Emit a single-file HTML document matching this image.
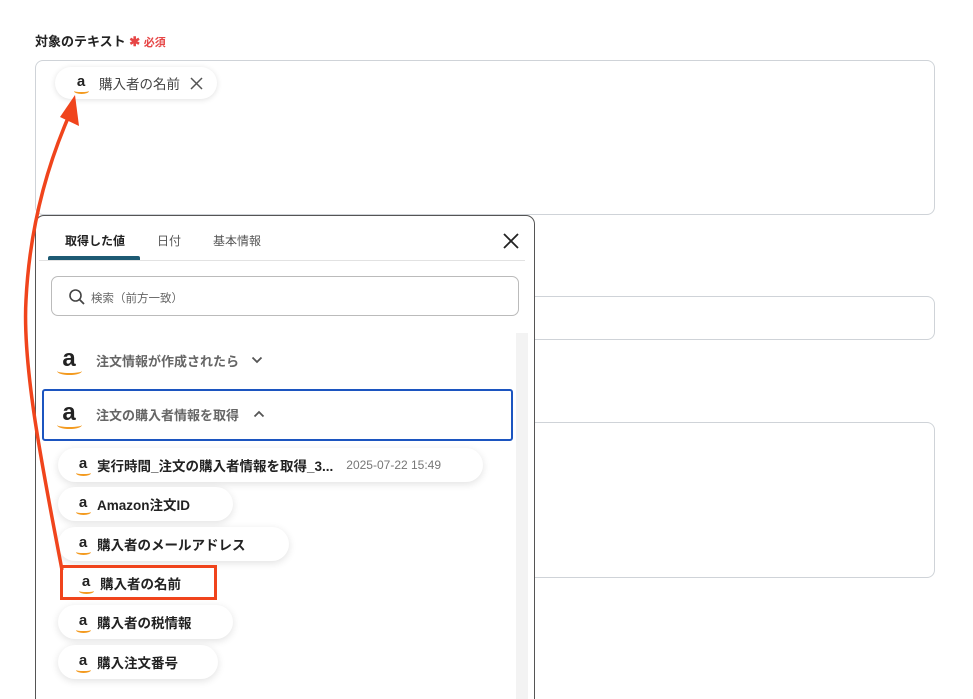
<!DOCTYPE html>
<html><head><meta charset="utf-8"><style>
*{box-sizing:border-box;margin:0;padding:0}
html,body{width:973px;height:699px;overflow:hidden}
body{background:#fff;position:relative;font-family:"Liberation Sans","Noto Sans CJK JP",sans-serif;color:#333}
.abs{position:absolute}
.field{position:absolute;border:1px solid #cfd3d8;border-radius:8px;background:#fff}
.chip{position:absolute;height:34px;border-radius:17px;background:#fff;box-shadow:0 2px 8px rgba(0,0,0,.12);display:flex;align-items:center;padding-left:15px;font-size:13.5px;font-weight:bold;color:#222;white-space:nowrap}
.a{display:inline-block;width:20px;font-weight:bold;font-size:15px;color:#222;position:relative;text-align:center;margin-right:4px;line-height:14px;top:-1px}
.a:after{content:"";position:absolute;left:3px;right:2px;bottom:-5px;height:4px;border-bottom:2px solid #f39a1f;border-radius:0 0 50% 50%}
.big{font-size:24px;width:30px;line-height:20px}
.big:after{bottom:-6px;height:6px}
</style></head><body>
<div class="abs" style="left:35px;top:31px;font-size:13px;font-weight:bold;color:#222">対象のテキスト <span style="color:#e64545">✱ <span style="font-size:11px">必須</span></span></div>
<div class="field" style="left:35px;top:60px;width:900px;height:155px"></div>
<div class="abs" style="left:55px;top:67px;width:162px;height:32px;border-radius:16px;background:#fff;box-shadow:0 1px 6px rgba(0,0,0,.12);display:flex;align-items:center;padding-left:16px;font-size:13.5px;color:#444"><span class="a">a</span><span style="margin-left:4px">購入者の名前</span><svg style="margin-left:10px" width="13" height="13" viewBox="0 0 13 13"><path d="M1 1L12 12M12 1L1 12" stroke="#555" stroke-width="1.5"/></svg></div>
<div class="field" style="left:35px;top:296px;width:900px;height:44px"></div>
<div class="field" style="left:35px;top:422px;width:900px;height:156px"></div>

<div class="abs" style="left:35px;top:215px;width:500px;height:500px;border:1px solid #555;border-radius:9px;background:#fff">
 <div class="abs" style="left:29px;top:16px;font-size:12px;font-weight:bold;color:#222">取得した値</div>
 <div class="abs" style="left:121px;top:16px;font-size:12px;color:#555">日付</div>
 <div class="abs" style="left:177px;top:16px;font-size:12px;color:#555">基本情報</div>
 <div class="abs" style="left:12px;top:40px;width:92px;height:4px;background:#1d5a73;border-radius:2px 2px 0 0"></div>
 <div class="abs" style="left:3px;top:44px;width:486px;height:1px;background:#e2e2e2"></div>
 <svg class="abs" style="left:466px;top:16px" width="18" height="18" viewBox="0 0 18 18"><path d="M2 2L16 16M16 2L2 16" stroke="#222" stroke-width="1.8"/></svg>
 <div class="abs" style="left:15px;top:60px;width:468px;height:40px;border:1px solid #bbb;border-radius:7px"></div>
 <svg class="abs" style="left:32px;top:72px" width="18" height="18" viewBox="0 0 18 18"><circle cx="7.5" cy="7.5" r="5.5" fill="none" stroke="#444" stroke-width="1.6"/><path d="M11.5 11.5L16 16" stroke="#444" stroke-width="1.8"/></svg>
 <div class="abs" style="left:55px;top:74px;font-size:11.5px;color:#666">検索（前方一致）</div>
 <div class="abs" style="left:480px;top:117px;width:12px;height:390px;background:#f3f3f3"></div>
 <div class="abs" style="left:18px;top:134px;display:flex;align-items:center;font-size:13px;font-weight:bold;color:#666"><span class="a big">a</span><span style="margin-left:8px">注文情報が作成されたら</span><svg style="margin-left:12px" width="12" height="8" viewBox="0 0 12 8"><path d="M1.5 1.5L6 6L10.5 1.5" fill="none" stroke="#555" stroke-width="1.8"/></svg></div>
 <div class="abs" style="left:6px;top:173px;width:471px;height:52px;border:2px solid #1c55c0;border-radius:3px"></div>
 <div class="abs" style="left:18px;top:188px;display:flex;align-items:center;font-size:13px;font-weight:bold;color:#666"><span class="a big">a</span><span style="margin-left:8px">注文の購入者情報を取得</span><svg style="margin-left:14px" width="12" height="8" viewBox="0 0 12 8"><path d="M1.5 6.5L6 2L10.5 6.5" fill="none" stroke="#555" stroke-width="1.8"/></svg></div>
</div>

<div class="chip" style="left:58px;top:448px;width:425px"><span class="a">a</span>実行時間_注文の購入者情報を取得_3...<span style="font-weight:normal;color:#777;font-size:12px;margin-left:13px">2025-07-22 15:49</span></div>
<div class="chip" style="left:58px;top:487px;width:175px"><span class="a">a</span>Amazon注文ID</div>
<div class="chip" style="left:58px;top:527px;width:231px"><span class="a">a</span>購入者のメールアドレス</div>
<div class="chip" style="left:60px;top:565px;width:157px;height:35px;border-radius:0;border:3px solid #f0441c;box-shadow:none;padding-left:13px"><span class="a">a</span>購入者の名前</div>
<div class="chip" style="left:58px;top:605px;width:175px"><span class="a">a</span>購入者の税情報</div>
<div class="chip" style="left:58px;top:645px;width:160px"><span class="a">a</span>購入注文番号</div>

<svg class="abs" style="left:0;top:0" width="973" height="699"><path d="M62 570 C45 480 22 370 26 300 C30 220 50 160 68 118" fill="none" stroke="#f0441c" stroke-width="3.5"/><path d="M75 95 L79 126 L60 117 Z" fill="#f0441c"/></svg>
</body></html>
